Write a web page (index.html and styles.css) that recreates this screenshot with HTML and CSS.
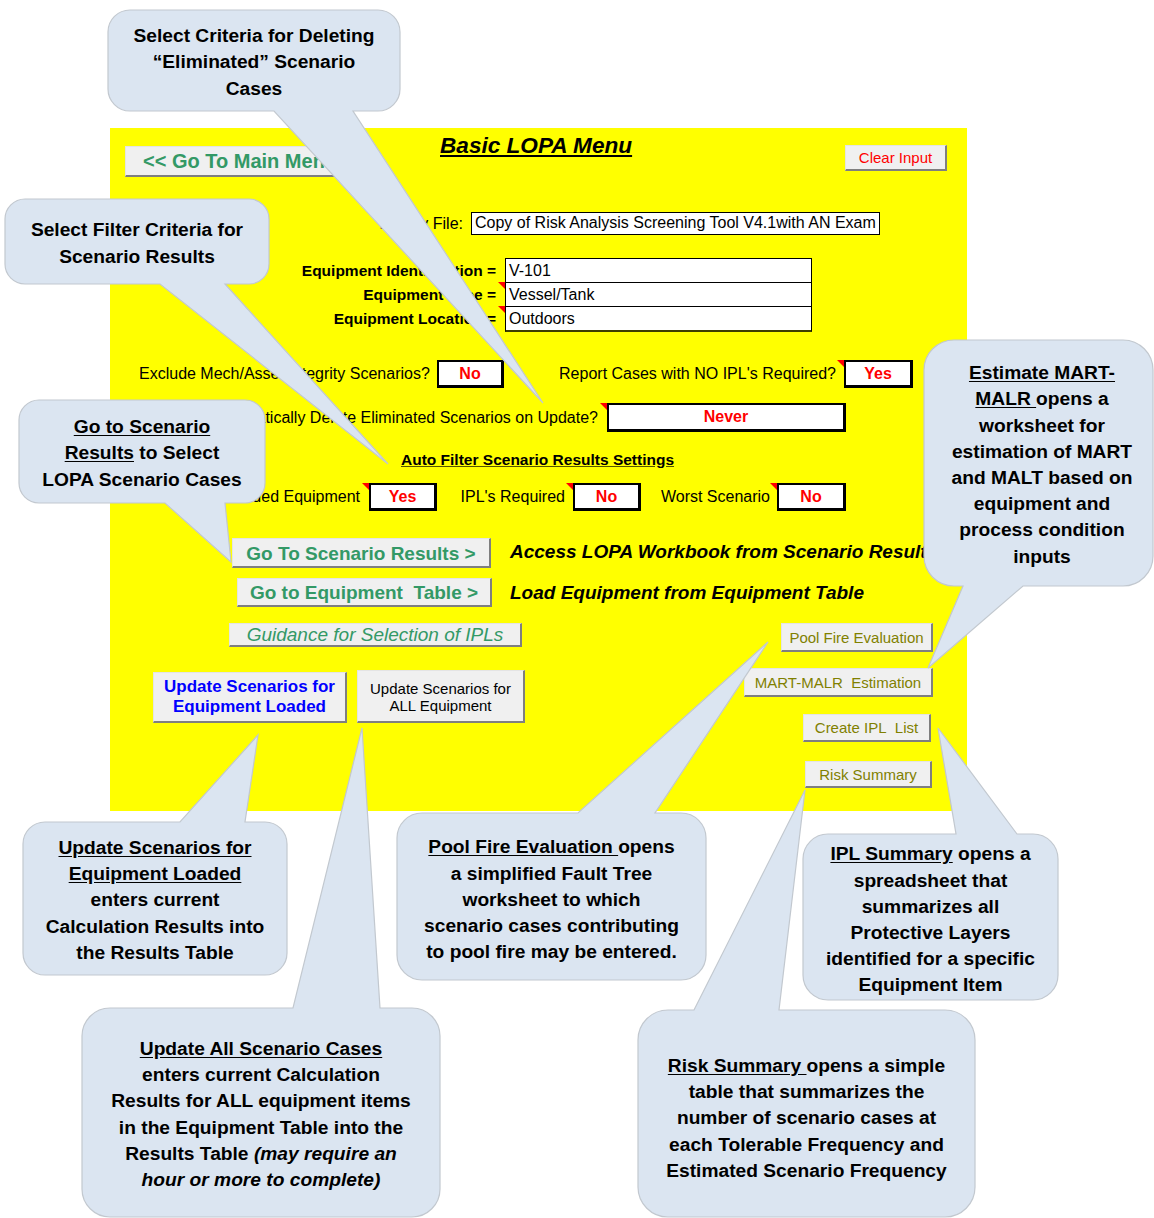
FILE: index.html
```html
<!DOCTYPE html>
<html>
    <head>
        <title>Basic LOPA Menu</title>
        <meta charset="utf-8">
        <link rel="stylesheet" href="styles.css">
    </head>
    <body>
        <div class="page">
            <div class="sheet">
                <div class="row-top">
                    <div class="xbtn btn-main">&lt;&lt; Go To Main Menu</div>
                    <div class="title">Basic LOPA Menu</div>
                    <div class="xbtn btn-clear">Clear Input</div>
                </div>

                <div class="row-file">
                    <div class="file-lbl">Library File:</div>
                    <div class="file-box">Copy of Risk Analysis Screening Tool V4.1with AN Exam</div>
                </div>

                <div class="equip">
                    <div class="equip-row">
                        <div class="eq-lbl">Equipment Identification =</div>
                        <div class="eq-box">V-101</div>
                    </div>
                    <div class="equip-row">
                        <div class="eq-lbl note">Equipment Type =</div>
                        <div class="eq-box">Vessel/Tank</div>
                    </div>
                    <div class="equip-row">
                        <div class="eq-lbl note">Equipment Location =</div>
                        <div class="eq-box last">Outdoors</div>
                    </div>
                </div>

                <div class="opt opt-1">
                    <div class="cell q-mech">Exclude Mech/Asset Integrity Scenarios?</div>
                    <div class="val v-mech">No</div>
                    <div class="cell q-report note">Report Cases with NO IPL's Required?</div>
                    <div class="val v-report">Yes</div>
                </div>

                <div class="opt opt-2">
                    <div class="cell q-delete note">Automatically Delete Eliminated Scenarios on Update?</div>
                    <div class="val v-delete">Never</div>
                </div>

                <div class="filter-head">Auto Filter Scenario Results Settings</div>

                <div class="opt opt-3">
                    <div class="cell q-excl note">Excluded Equipment</div>
                    <div class="val v-small">Yes</div>
                    <div class="cell q-ipl note">IPL's Required</div>
                    <div class="val v-small">No</div>
                    <div class="cell q-worst note">Worst Scenario</div>
                    <div class="val v-worst">No</div>
                </div>

                <div class="go-row go-1">
                    <div class="xbtn btn-go btn-results">Go To Scenario Results &gt;</div>
                    <div class="go-note">Access LOPA Workbook from Scenario Results</div>
                </div>
                <div class="go-row go-2">
                    <div class="xbtn btn-go btn-equip">Go to Equipment&nbsp; Table &gt;</div>
                    <div class="go-note">Load Equipment from Equipment Table</div>
                </div>

                <div class="bottom">
                    <div class="bottom-left">
                        <div class="xbtn btn-guide">Guidance for Selection of IPLs</div>
                        <div class="update-row">
                            <div class="xbtn btn-upd1">Update Scenarios for<br>Equipment Loaded</div>
                            <div class="xbtn btn-upd2">Update Scenarios for<br>ALL Equipment</div>
                        </div>
                    </div>
                    <div class="bottom-right">
                        <div class="xbtn btn-side side-pool">Pool Fire Evaluation</div>
                        <div class="xbtn btn-side side-mart">MART-MALR&nbsp; Estimation</div>
                        <div class="xbtn btn-side side-ipl">Create IPL&nbsp; List</div>
                        <div class="xbtn btn-side side-risk">Risk Summary</div>
                    </div>
                </div>
            </div>

            <!-- callout shapes -->
            <svg class="bubbles" width="1154" height="1218" viewBox="0 0 1154 1218">
                <path class="bubble" d="M130 10 H378 A22 22 0 0 1 400 32 V89 A22 22 0 0 1 378 111 H353 L543 403 L274 111 H130 A22 22 0 0 1 108 89 V32 A22 22 0 0 1 130 10 Z"/>
                <path class="bubble" d="M25 199 H249 A20 20 0 0 1 269 219 V264 A20 20 0 0 1 249 284 H225 L388 464 L160 284 H25 A20 20 0 0 1 5 264 V219 A20 20 0 0 1 25 199 Z"/>
                <path class="bubble" d="M39 400 H245 A20 20 0 0 1 265 420 V483 A20 20 0 0 1 245 503 H225 L231 562 L165 503 H39 A20 20 0 0 1 19 483 V420 A20 20 0 0 1 39 400 Z"/>
                <path class="bubble" d="M954 340 H1123 A30 30 0 0 1 1153 370 V556 A30 30 0 0 1 1123 586 H1023 L928 668 L963 586 H954 A30 30 0 0 1 924 556 V370 A30 30 0 0 1 954 340 Z"/>
                <path class="bubble" d="M45 822 H180 L258 735 L245 822 H265 A22 22 0 0 1 287 844 V953 A22 22 0 0 1 265 975 H45 A22 22 0 0 1 23 953 V844 A22 22 0 0 1 45 822 Z"/>
                <path class="bubble" d="M110 1008 H293 L362 728 L380 1008 H412 A28 28 0 0 1 440 1036 V1189 A28 28 0 0 1 412 1217 H110 A28 28 0 0 1 82 1189 V1036 A28 28 0 0 1 110 1008 Z"/>
                <path class="bubble" d="M422 813 H578 L768 642 L655 813 H681 A25 25 0 0 1 706 838 V955 A25 25 0 0 1 681 980 H422 A25 25 0 0 1 397 955 V838 A25 25 0 0 1 422 813 Z"/>
                <path class="bubble" d="M828 834 H956 L938 728 L1017 834 H1033 A25 25 0 0 1 1058 859 V975 A25 25 0 0 1 1033 1000 H828 A25 25 0 0 1 803 975 V859 A25 25 0 0 1 828 834 Z"/>
                <path class="bubble" d="M668 1010 H694 L805 790 L779 1010 H945 A30 30 0 0 1 975 1040 V1187 A30 30 0 0 1 945 1217 H668 A30 30 0 0 1 638 1187 V1040 A30 30 0 0 1 668 1010 Z"/>
            </svg>

            <div class="callout c-delete">Select Criteria for Deleting<br>&ldquo;Eliminated&rdquo; Scenario<br>Cases</div>
            <div class="callout c-filter">Select Filter Criteria for<br>Scenario Results</div>
            <div class="callout c-goto"><div><span class="u">Go to Scenario</span><br><span class="u">Results</span> to Select<br>LOPA Scenario Cases</div></div>
            <div class="callout c-mart"><div><span class="u">Estimate MART-</span><br><span class="u">MALR </span>opens a<br>worksheet for<br>estimation of MART<br>and MALT based on<br>equipment and<br>process condition<br>inputs</div></div>
            <div class="callout c-loaded"><div><span class="u">Update Scenarios for</span><br><span class="u">Equipment Loaded</span><br>enters current<br>Calculation Results into<br>the Results Table</div></div>
            <div class="callout c-all"><div><span class="u">Update All Scenario Cases</span><br>enters current Calculation<br>Results for ALL equipment items<br>in the Equipment Table into the<br>Results Table <i>(may require an<br>hour or more to complete)</i></div></div>
            <div class="callout c-pool"><div><span class="u">Pool Fire Evaluation </span>opens<br>a simplified Fault Tree<br>worksheet to which<br>scenario cases contributing<br>to pool fire may be entered.</div></div>
            <div class="callout c-ipl"><div><span class="u">IPL Summary</span> opens a<br>spreadsheet that<br>summarizes all<br>Protective Layers<br>identified for a specific<br>Equipment Item</div></div>
            <div class="callout c-risk"><div><span class="u">Risk Summary </span>opens a simple<br>table that summarizes the<br>number of scenario cases at<br>each Tolerable Frequency and<br>Estimated Scenario Frequency</div></div>
        </div>
    </body>
</html>
```

FILE: styles.css
```css
body {
    margin: 0;
    background: #fff;
    font-family: "Liberation Sans", Arial, sans-serif;
}

.page {
    position: relative;
    width: 1154px;
    height: 1218px;
    overflow: hidden;
}

/* the yellow worksheet */
.sheet {
    margin: 128px 0 0 110px;
    width: 857px;
    height: 683px;
    background: #ffff00;
    color: #000;
    font-size: 16px;
    overflow: hidden;
}

.xbtn {
    box-sizing: border-box;
    display: flex;
    align-items: center;
    justify-content: center;
    text-align: center;
    background: #f0f0f0;
    border-top: 1px solid #e4e4e4;
    border-left: 1px solid #e4e4e4;
    border-right: 2px solid #7f7f7f;
    border-bottom: 2px solid #7f7f7f;
    white-space: nowrap;
}

.row-top {
    display: flex;
    align-items: flex-start;
    height: 84px;
}
.btn-main {
    margin: 18px 0 0 15px;
    width: 220px;
    height: 31px;
    justify-content: flex-start;
    padding-left: 17px;
    color: #339966;
    font-weight: bold;
    font-size: 20px;
}
.title {
    margin: 5px 0 0 95px;
    font-size: 22.6px;
    font-weight: bold;
    font-style: italic;
    text-decoration: underline;
    text-decoration-thickness: 2px;
    text-underline-offset: 2px;
}
.btn-clear {
    margin: 17px 20px 0 auto;
    width: 102px;
    height: 26px;
    color: #ff0000;
    font-size: 15px;
}

.row-file {
    display: flex;
    align-items: center;
    height: 23px;
}
.file-lbl {
    width: 353px;
    text-align: right;
}
.file-box {
    box-sizing: border-box;
    margin-left: 8px;
    width: 409px;
    height: 23px;
    padding-left: 3px;
    line-height: 20px;
    background: #fff;
    border: 1.5px solid #000;
    white-space: nowrap;
    overflow: hidden;
}

.equip {
    margin-top: 23px;
}
.equip-row {
    display: flex;
    height: 24px;
}
.eq-lbl {
    position: relative;
    box-sizing: border-box;
    width: 395px;
    padding-right: 9px;
    text-align: right;
    font-weight: bold;
    font-size: 15.5px;
    line-height: 25px;
}
.eq-box {
    box-sizing: border-box;
    width: 307px;
    height: 25px;
    padding-left: 3px;
    line-height: 23px;
    background: #fff;
    border: 1px solid #000;
}
.eq-box.last {
    height: 26px;
    border-bottom: 2px solid #3d3d00;
}

/* red comment marker in the corner of a cell */
.note::after {
    content: "";
    position: absolute;
    top: 0;
    right: 0;
    border-top: 7px solid #ff0000;
    border-left: 7px solid transparent;
}

.opt {
    display: flex;
    align-items: stretch;
}
.cell {
    position: relative;
    box-sizing: border-box;
    display: flex;
    align-items: center;
    white-space: nowrap;
}
.val {
    box-sizing: border-box;
    display: flex;
    align-items: center;
    justify-content: center;
    background: #fff;
    border: 2px solid #000;
    border-right-width: 3px;
    border-bottom-width: 3px;
    color: #ff0000;
    font-weight: bold;
    font-size: 16px;
}

.opt-1 {
    margin-top: 30px;
    height: 28px;
}
.q-mech {
    width: 327px;
    padding-left: 29px;
}
.v-mech { width: 67px; }
.q-report {
    width: 340px;
    padding-right: 8px;
    justify-content: flex-end;
}
.v-report { width: 69px; }

.opt-2 {
    margin-top: 15px;
    height: 29px;
}
.q-delete {
    width: 497px;
    padding-right: 9px;
    justify-content: flex-end;
}
.v-delete { width: 239px; }

.filter-head {
    margin-top: 18px;
    padding-left: 291px;
    font-weight: bold;
    font-size: 15.5px;
    line-height: 20px;
    text-decoration: underline;
    text-decoration-color: #555500;
}

.opt-3 {
    margin-top: 13px;
    height: 28px;
}
.q-excl {
    width: 259px;
    padding-right: 9px;
    justify-content: flex-end;
}
.v-small { width: 68px; }
.q-ipl {
    width: 136px;
    padding-right: 8px;
    justify-content: flex-end;
}
.q-worst {
    width: 136px;
    padding-right: 7px;
    justify-content: flex-end;
}
.v-worst { width: 69px; }

.go-row {
    display: flex;
    align-items: center;
}
.go-1 { margin-top: 27px; }
.go-2 { margin-top: 10px; }
.btn-go {
    color: #339966;
    font-weight: bold;
    font-size: 19px;
    padding-top: 2px;
}
.btn-results {
    margin-left: 122px;
    width: 259px;
    height: 30px;
}
.btn-equip {
    margin-left: 127px;
    width: 255px;
    height: 29px;
}
.go-note {
    margin-left: 18px;
    font-weight: bold;
    font-style: italic;
    font-size: 19px;
    white-space: nowrap;
}
.go-1 .go-note {
    margin-left: 19px;
    margin-top: -3px;
}

.bottom {
    display: flex;
    margin-top: 16px;
}
.btn-guide {
    margin-left: 119px;
    width: 293px;
    height: 24px;
    color: #339966;
    font-style: italic;
    font-size: 19px;
}
.update-row {
    display: flex;
    align-items: flex-start;
    margin-top: 23px;
}
.btn-upd1 {
    margin: 2px 0 0 43px;
    width: 194px;
    height: 51px;
    color: #0000ff;
    font-weight: bold;
    font-size: 17px;
    line-height: 20px;
}
.btn-upd2 {
    margin-left: 10px;
    width: 168px;
    height: 53px;
    font-size: 15px;
    line-height: 17px;
    padding-top: 2px;
}

.bottom-right {
    display: flex;
    flex-direction: column;
    align-items: flex-end;
    margin: 0 34px 0 auto;
}
.btn-side {
    color: #808000;
    font-size: 15px;
    height: 29px;
}
.side-pool { width: 152px; }
.side-mart {
    margin-top: 16px;
    width: 189px;
}
.side-ipl {
    margin: 17px 2px 0 0;
    width: 128px;
    height: 28px;
}
.side-risk {
    margin: 19px 1px 0 0;
    width: 127px;
    height: 27px;
}

/* callouts laid over the sheet */
.bubbles {
    position: absolute;
    top: 0;
    left: 0;
}
.bubble {
    fill: #dbe5f1;
    stroke: #c2c8cf;
    stroke-width: 1.2;
}

.callout {
    position: absolute;
    box-sizing: border-box;
    padding-top: 4px;
    display: flex;
    align-items: center;
    justify-content: center;
    text-align: center;
    color: #000;
    font-weight: bold;
    font-size: 19.2px;
    line-height: 26.2px;
    white-space: nowrap;
}
.callout .u {
    text-decoration: underline;
    text-underline-offset: 2px;
}

.c-delete { left: 108px; top: 10px; width: 292px; height: 101px; }
.c-filter { left: 5px; top: 199px; width: 264px; height: 85px; }
.c-goto { left: 19px; top: 400px; width: 246px; height: 103px; }
.c-mart { left: 924px; top: 340px; width: 236px; height: 246px; }
.c-loaded { left: 23px; top: 822px; width: 264px; height: 153px; }
.c-all { left: 82px; top: 1008px; width: 358px; height: 209px; }
.c-pool { left: 397px; top: 813px; width: 309px; height: 170px; }
.c-ipl { left: 803px; top: 834px; width: 255px; height: 168px; }
.c-risk { left: 638px; top: 1018px; width: 337px; height: 197px; }
```
